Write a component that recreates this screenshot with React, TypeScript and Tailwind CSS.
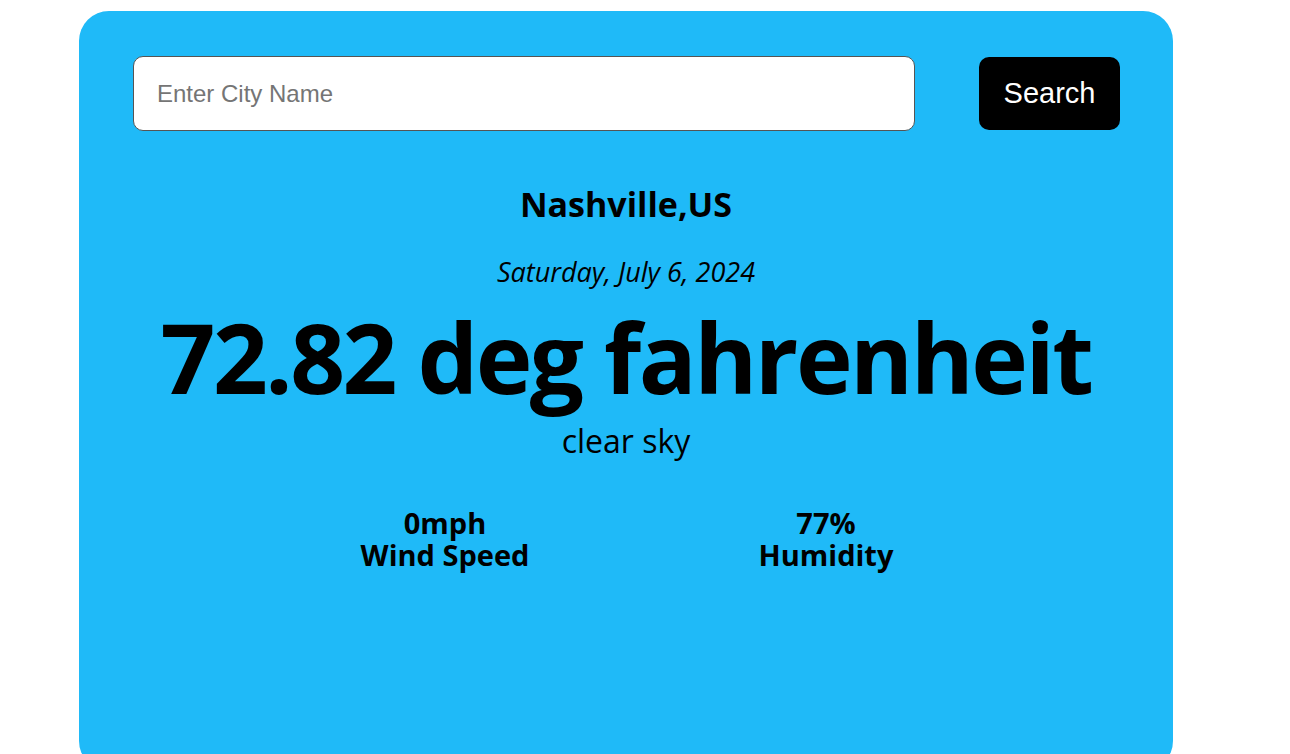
import React, { useState } from 'react';

const App = () => {
  const [city, setCity] = useState('');

  return (
    <div className="min-h-screen bg-white">
      <div
        className="ml-[79px] mt-[11px] w-[1094px] h-[760px] rounded-[30px] bg-[#1fbaf8] px-[54px] pt-[45px]"
        style={{ fontFamily: '"Open Sans", "Noto Sans", sans-serif' }}
      >
        <div className="flex items-center justify-between">
          <input
            value={city}
            onChange={(e) => setCity(e.target.value)}
            type="text"
            placeholder="Enter City Name"
            className="w-[782px] h-[75px] rounded-[10px] border border-[#555] bg-white px-[23px] text-[24px] outline-none placeholder:text-[#757575]"
            style={{ fontFamily: '"Liberation Sans", Arial, sans-serif' }}
          />
          <button
            className="mr-[-1px] h-[73px] w-[141px] rounded-[10px] bg-black text-[29px] text-white"
            style={{ fontFamily: '"Liberation Sans", Arial, sans-serif' }}
          >
            Search
          </button>
        </div>

        <div className="flex flex-col items-center text-black">
          <h1 className="mt-[50px] text-[34px] font-bold leading-[46px]">Nashville,US</h1>
          <p className="mt-[28px] text-[27px] italic leading-[34px]">Saturday, July 6, 2024</p>
          <h2 className="mt-[20px] whitespace-nowrap text-[96px] font-bold leading-[96px] tracking-[-2.5px]">
            72.82 deg fahrenheit
          </h2>
          <p className="mt-[16px] text-[32px] leading-[40px]">clear sky</p>
        </div>

        <div className="mt-[46px] flex gap-[181px] pl-[212px] text-[29px] font-bold leading-[32px] text-black">
          <p className="w-[200px] text-center">
            0mph
            <br />
            Wind Speed
          </p>
          <p className="w-[200px] text-center">
            77%
            <br />
            Humidity
          </p>
        </div>
      </div>
    </div>
  );
};

export default App;
